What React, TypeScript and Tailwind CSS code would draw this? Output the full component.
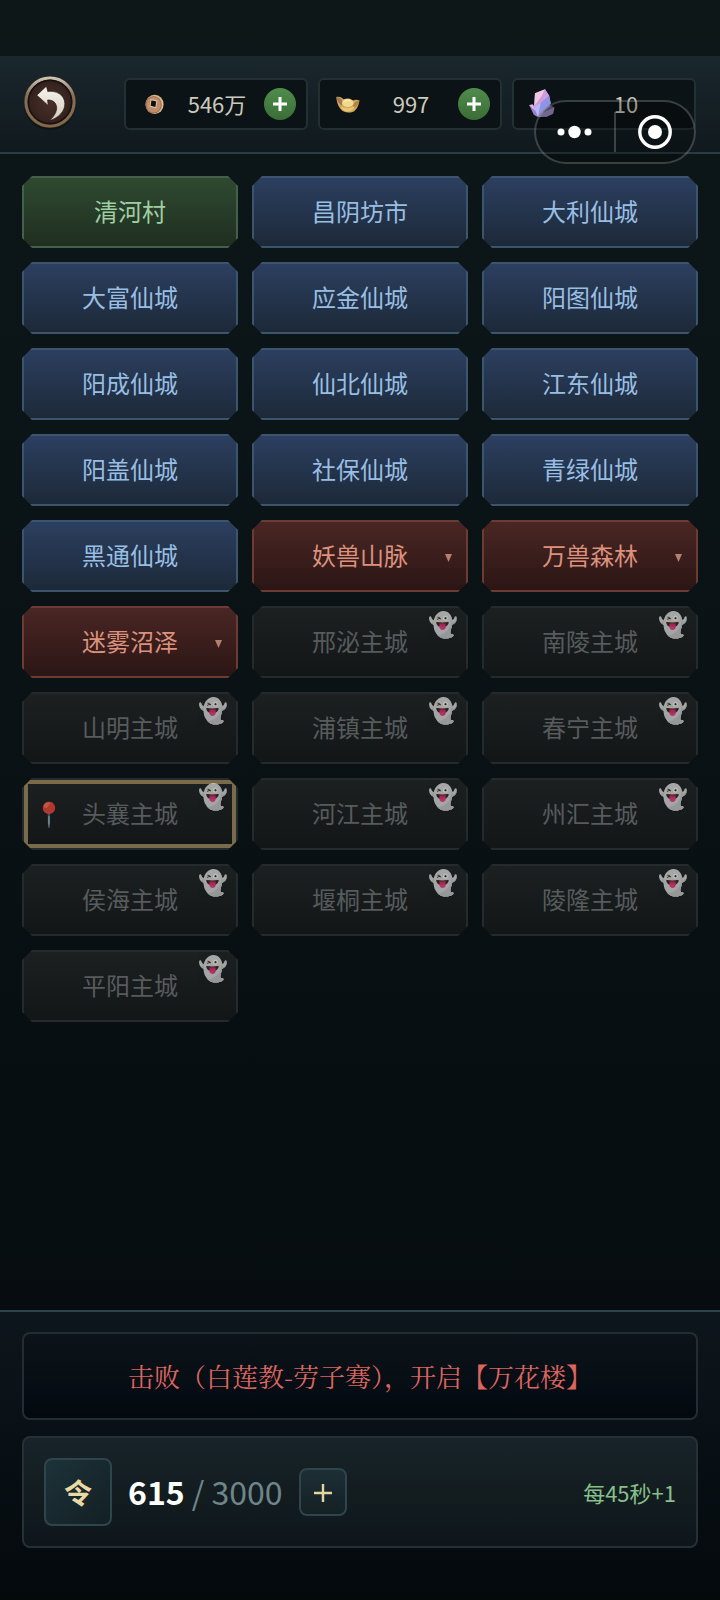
import React from "react";

type Kind = "village" | "city" | "wild" | "locked";

interface Place {
  name: string;
  kind: Kind;
  current?: boolean;
}

const places: Place[] = [
  { name: "清河村", kind: "village" },
  { name: "昌阴坊市", kind: "city" },
  { name: "大利仙城", kind: "city" },
  { name: "大富仙城", kind: "city" },
  { name: "应金仙城", kind: "city" },
  { name: "阳图仙城", kind: "city" },
  { name: "阳成仙城", kind: "city" },
  { name: "仙北仙城", kind: "city" },
  { name: "江东仙城", kind: "city" },
  { name: "阳盖仙城", kind: "city" },
  { name: "社保仙城", kind: "city" },
  { name: "青绿仙城", kind: "city" },
  { name: "黑通仙城", kind: "city" },
  { name: "妖兽山脉", kind: "wild" },
  { name: "万兽森林", kind: "wild" },
  { name: "迷雾沼泽", kind: "wild" },
  { name: "邢泌主城", kind: "locked" },
  { name: "南陵主城", kind: "locked" },
  { name: "山明主城", kind: "locked" },
  { name: "浦镇主城", kind: "locked" },
  { name: "春宁主城", kind: "locked" },
  { name: "头襄主城", kind: "locked", current: true },
  { name: "河江主城", kind: "locked" },
  { name: "州汇主城", kind: "locked" },
  { name: "侯海主城", kind: "locked" },
  { name: "堰桐主城", kind: "locked" },
  { name: "陵隆主城", kind: "locked" },
  { name: "平阳主城", kind: "locked" },
];

const kindStyles: Record<Kind, string> = {
  village: "border-[#42604a] bg-linear-to-b from-[#2f4a31] to-[#1f2e20] text-[#a0cfa2]",
  city: "border-[#3d546f] bg-linear-to-b from-[#2c3f60] to-[#1c2938] text-[#98bee3]",
  wild: "border-[#6b3b34] bg-linear-to-b from-[#4a2624] to-[#2b1615] text-[#dc917c]",
  locked: "border-[#252b2d] bg-linear-to-b from-[#1c2021] to-[#121617] text-[#575b5c]",
};

function PlaceTile({ place }: { place: Place }) {
  return (
    <button
      type="button"
      className={`relative flex h-18 items-center justify-center border-2 pb-0.5 text-2xl [clip-path:polygon(10px_0,calc(100%-10px)_0,100%_10px,100%_calc(100%-10px),calc(100%-10px)_100%,10px_100%,0_calc(100%-10px),0_10px)] ${kindStyles[place.kind]} ${place.current ? "shadow-[inset_0_0_0_4px_#7a6c4a]" : ""}`}
    >
      {place.name}
      {place.kind === "wild" && (
        <svg viewBox="0 0 7 8" className="absolute top-8 right-3.5 h-2 w-[7px]" aria-hidden="true">
          <path d="M0 0h7L3.500 8z" fill="#b5806f" />
        </svg>
      )}
      {place.kind === "locked" && (
        <span className="absolute top-px right-2 text-2xl leading-7 opacity-70">👻</span>
      )}
      {place.current && (
        <span className="absolute left-2.5 text-2xl leading-7 opacity-70">📍</span>
      )}
    </button>
  );
}

function BackIcon() {
  return (
    <svg viewBox="0 0 52 52" className="size-13 overflow-visible" aria-hidden="true">
      <defs>
        <linearGradient id="rim" x1="0" y1="0" x2="0" y2="1">
          <stop offset="0" stopColor="#c9c6b2" />
          <stop offset="0.35" stopColor="#83705a" />
          <stop offset="1" stopColor="#856848" />
        </linearGradient>
        <radialGradient id="face">
          <stop offset="0" stopColor="#4a302a" />
          <stop offset="1" stopColor="#33211e" />
        </radialGradient>
        <linearGradient id="arrow" x1="0" y1="0" x2="0" y2="1">
          <stop offset="0" stopColor="#f6f4ef" />
          <stop offset="1" stopColor="#d5cbb8" />
        </linearGradient>
      </defs>
      <circle cx="26" cy="28" r="26" fill="#000" opacity="0.3" />
      <circle cx="26" cy="26" r="26" fill="#3a2c20" />
      <circle cx="26" cy="26" r="24" fill="none" stroke="url(#rim)" strokeWidth="3" />
      <circle cx="26" cy="26" r="21.6" fill="url(#face)" stroke="#1b1110" strokeWidth="1.6" />
      <path
        d="M12.800 19.200 22.400 10.200l1.400 5.400c8.400-1.400 16.800 3.400 17 11.800.2 7.400-5.600 14.200-15.200 17.200 4.200-4 7.600-8.800 7-13.600-.6-4.600-3.800-7.200-9-7l.6 5.400z"
        fill="url(#arrow)"
        stroke="#1c100d"
        strokeWidth="0.6"
      />
    </svg>
  );
}

function CoinIcon() {
  return (
    <svg viewBox="0 0 32 32" className="size-8" aria-hidden="true">
      <ellipse cx="16.6" cy="16.4" rx="9" ry="9.600" fill="#dcbb8c" />
      <ellipse cx="15.600" cy="16.800" rx="8.200" ry="8.800" fill="#a06b50" />
      <ellipse cx="15.600" cy="16.800" rx="7.200" ry="7.800" fill="#bd8c6e" />
      <path d="m13 11.600 5.800 1.400-1 6.800-5.800-1.800z" fill="#0b0f10" stroke="#e0c09a" strokeWidth="1.100" />
    </svg>
  );
}

function IngotIcon() {
  return (
    <svg viewBox="0 0 32 32" className="size-8" aria-hidden="true">
      <path
        d="M4.400 9c1.600-.6 4.600-.4 7 2.200 2.800-1.200 7-1.200 9.600 1.400 2.200-1.200 4.600-1 6.400-.2-.6 5.400-3.400 11.400-8.600 12-2.400.3-5 .2-7-.8C7.600 21.600 4.600 15.400 4.400 9z"
        fill="#d6a755"
      />
      <path d="M4.400 9c2.800.2 5 1.800 6.400 4.400l-1 4.400C6.800 15.800 5 12.800 4.400 9z" fill="#a07a52" />
      <path d="M27.400 12.400c-3 .2-5 1.800-6.400 4.200l.6 4c3-1.800 5.200-4.800 5.800-8.200z" fill="#b18443" />
      <ellipse cx="15.800" cy="15" rx="5.800" ry="4" fill="#f0d98f" />
      <path d="M8.600 18.200c4 2.600 10.600 2.600 14.400-.2-1.400 3.600-3.600 5.400-7.400 5.400-3.600 0-5.800-1.800-7-5.200z" fill="#e8c878" />
      <path d="M11.400 13.800c2-1.600 4.600-2 7-1" stroke="#fbf0c0" strokeWidth="1.200" fill="none" />
    </svg>
  );
}

function CrystalIcon() {
  return (
    <svg viewBox="0 0 32 32" className="size-8" aria-hidden="true">
      <path d="m3.200 17 3.600-.6 5 6.400-.6 6-3.400-2z" fill="#9f7ccb" />
      <path d="m3.200 17 3.600-.6 4.400 8.400z" fill="#d9b6ea" />
      <path d="m12 29 2.400-7.400 8.600-4.800 5.400 2.800-1.400 6.200-6.400 3z" fill="#6f6591" />
      <path d="m12 29 4.600-4.600 11.800-4.800-1.400 6.200-6.400 3z" fill="#978bbd" />
      <path d="M9 5.200 19 1.200l4.200 6.600 1.600 7.800L11.800 29 8.200 18.400z" fill="#a48ade" />
      <path d="M9 5.200 19 1.200l-2.800 6.600-8 10.600z" fill="#efc6e0" />
      <path d="m19 1.200 4.200 6.600-8.400 7.200-6.600 3.400 8-10.600z" fill="#cf9ddd" />
      <path d="m23.200 7.800 1.600 7.800L11.800 29l3-14z" fill="#8f93e6" />
      <path d="m14.800 15-3 14-3.600-10.600z" fill="#b9b8f2" />
    </svg>
  );
}

function Resource({ icon, value, label, canAdd }: { icon: React.ReactNode; value: string; label: string; canAdd?: boolean }) {
  return (
    <div
      className={`flex h-13 min-w-0 items-center rounded-md border-2 border-[#223034] bg-[#0b1316] pl-3 ${canAdd ? "pr-2.5" : "pr-0"}`}
    >
      {icon}
      <span className="flex-1 pb-0.5 text-center text-[22px] leading-8 text-[#cdc9bc]" aria-label={label}>
        {value}
      </span>
      {canAdd && (
        <button
          type="button"
          aria-label={`增加${label}`}
          className="grid size-8 place-items-center rounded-full bg-linear-to-b from-[#4f8d4c] to-[#3a6d36]"
        >
          <svg viewBox="0 0 14 14" className="size-3.5" aria-hidden="true">
            <path d="M7 0v14M0 7h14" stroke="#fff" strokeWidth="3" />
          </svg>
        </button>
      )}
    </div>
  );
}

function Capsule() {
  return (
    <div className="absolute top-11 right-6 flex h-16 w-[162px] items-center rounded-full border-2 border-white/20 bg-black/25">
      <button type="button" aria-label="更多" className="grid h-full flex-1 place-items-center">
        <svg viewBox="0 0 36 14" className="h-3.5 w-9" aria-hidden="true" fill="#fff">
          <circle cx="4" cy="7" r="3.500" />
          <circle cx="17.500" cy="7" r="6.200" />
          <circle cx="31" cy="7" r="3.500" />
        </svg>
      </button>
      <span className="h-10 w-0.5 bg-white/20" />
      <button type="button" aria-label="关闭" className="grid h-full flex-1 place-items-center">
        <svg viewBox="0 0 34 34" className="size-[34px]" aria-hidden="true">
          <circle cx="17" cy="17" r="15.200" fill="none" stroke="#fff" strokeWidth="3.400" />
          <circle cx="17" cy="17" r="7" fill="#fff" />
        </svg>
      </button>
    </div>
  );
}

export default function App() {
  return (
    <div className="flex min-h-screen flex-col bg-linear-to-b from-[#0d1718] via-[#091114] to-[#050a0e] pt-14 font-['Noto_Sans_CJK_SC','Noto_Sans',sans-serif]">
      <header className="relative flex items-center gap-12 border-b-2 border-[#2a3d44] bg-linear-to-b from-[#1a272d] to-[#10191e] px-6 py-[22px]">
        <button type="button" aria-label="返回" className="-mt-1 shrink-0 rounded-full">
          <BackIcon />
        </button>
        <div className="grid min-w-0 flex-1 grid-cols-3 gap-2.5">
          <Resource icon={<CoinIcon />} value="546万" label="铜钱" canAdd />
          <Resource icon={<IngotIcon />} value="997" label="元宝" canAdd />
          <Resource icon={<CrystalIcon />} value="10" label="晶石" />
        </div>
        <Capsule />
      </header>

      <main className="flex-1 px-[22px] py-[22px]">
        <div className="grid grid-cols-3 gap-3.5">
          {places.map((p) => (
            <PlaceTile key={p.name} place={p} />
          ))}
        </div>
      </main>

      <footer className="flex flex-col gap-4 border-t-2 border-[#2f424a] bg-linear-to-b from-[#0e161d] to-[#04090c] px-[22px] pt-5 pb-[52px]">
        <p className="flex h-[88px] items-center justify-center rounded-lg border-2 border-[#232e33] bg-linear-to-b from-[#0c141a] to-[#040910] pb-0.5 font-['Noto_Serif_CJK_SC','Noto_Sans_CJK_SC',serif] text-[26px] text-[#dd655f]">
          击败（白莲教-劳子骞），开启【万花楼】
        </p>
        <div className="flex h-28 items-center rounded-lg border-2 border-[#253136] bg-linear-to-b from-[#18232a] via-[#131d20] to-[#0e161b] px-5">
          <span className="grid size-17 place-items-center rounded-lg border-2 border-[#2d454b] bg-linear-to-br from-[#1d3239] to-[#132024] text-[28px] font-bold text-[#ead9a4]">
            令
          </span>
          <p className="ml-4 pb-0.5 text-[32px] leading-10 text-[#6f858c]">
            <strong className="font-bold text-white">615</strong> / 3000
          </p>
          <button
            type="button"
            aria-label="增加令牌"
            className="ml-4 grid size-12 place-items-center rounded-lg border-2 border-[#2d454b] bg-linear-to-b from-[#1d2f36] to-[#142024] pt-0.5"
          >
            <svg viewBox="0 0 18 18" className="size-[18px]" aria-hidden="true">
              <path d="M9 0v18M0 9h18" stroke="#e3d5a2" strokeWidth="2.400" />
            </svg>
          </button>
          <span className="ml-auto text-[22px] leading-8 text-[#86c08a]">每45秒+1</span>
        </div>
      </footer>
    </div>
  );
}
